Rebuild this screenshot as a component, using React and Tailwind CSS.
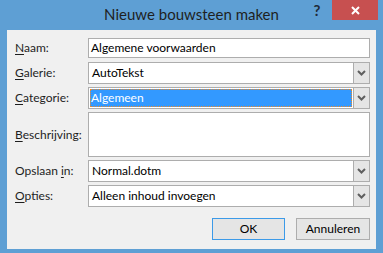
const font = { fontFamily: 'Lato, "Noto Sans", sans-serif' };

const Chevron = () => (
  <svg width="9" height="6" viewBox="0 0 9 6">
    <path d="M1 1 L4.5 4.5 L8 1" fill="none" stroke="#5f5f5f" strokeWidth="2" />
  </svg>
);

const Label = ({ u, rest }) => (
  <span className="w-[73px] shrink-0 text-[12px] text-[#1e1e1e]">
    <span className="underline underline-offset-2">{u}</span>
    {rest}
  </span>
);

const TextField = ({ value, h = 'h-[20px]' }) => (
  <div className={`flex-1 ${h} bg-white border border-[#adadad] flex items-center px-[2px] text-[12px] text-black`}>
    {value}
  </div>
);

const Combo = ({ value, selected }) => (
  <div className="flex-1 h-[22px] bg-white border border-[#adadad] flex items-stretch">
    <div className="flex-1 flex items-center p-[1px]">
      {selected ? (
        <div className="w-full h-full bg-[#3399ff] outline outline-1 outline-dotted outline-[#f08a24] -outline-offset-1 flex items-center px-[1px] text-[12px] text-white">
          {value}
        </div>
      ) : (
        <span className="px-[2px] text-[12px] text-black">{value}</span>
      )}
    </div>
    <div className="w-[16px] bg-[#e5e5e5] border-l border-[#adadad] flex items-center justify-center">
      <Chevron />
    </div>
  </div>
);

export default function App() {
  return (
    <div className="w-[383px] h-[253px] bg-[#5e9fd4] flex flex-col px-[7px] pb-[4px] relative" style={font}>
      <div className="h-[30px] flex items-center justify-center text-[15px] text-[#1f1f1f] pb-[1px]">
        Nieuwe bouwsteen maken
      </div>
      <div className="absolute top-0 right-[5px] flex items-start">
        <div className="w-[30px] h-[20px] flex items-center justify-center text-[15px] font-bold text-[#1e2a38]">?</div>
        <div className="w-[46px] h-[20px] bg-[#c75050] flex items-center justify-center">
          <svg width="9" height="9" viewBox="0 0 9 9">
            <path d="M1 1 L8 8 M8 1 L1 8" stroke="white" strokeWidth="2" />
          </svg>
        </div>
      </div>
      <div className="flex-1 bg-[#f0f0f0] pt-[8px] pl-[8px] pr-[6px] flex flex-col">
        <div className="flex items-center">
          <Label u="N" rest="aam:" />
          <TextField value="Algemene voorwaarden" />
        </div>
        <div className="flex items-center mt-[4px]">
          <Label u="G" rest="alerie:" />
          <Combo value="AutoTekst" />
        </div>
        <div className="flex items-center mt-[3px]">
          <Label u="C" rest="ategorie:" />
          <Combo value="Algemeen" selected />
        </div>
        <div className="flex items-center mt-[3px]">
          <Label u="B" rest="eschrijving:" />
          <TextField value="" h="h-[45px]" />
        </div>
        <div className="flex items-center mt-[3px]">
          <span className="w-[73px] shrink-0 text-[12px] text-[#1e1e1e]">
            Opslaan <span className="underline underline-offset-2">i</span>n:
          </span>
          <Combo value="Normal.dotm" />
        </div>
        <div className="flex items-center mt-[3px]">
          <Label u="O" rest="pties:" />
          <Combo value="Alleen inhoud invoegen" />
        </div>
        <div className="flex justify-end gap-[11px] mt-[11px]">
          <button className="w-[73px] h-[22px] bg-[#e5e5e5] border border-[#3c9ae8] text-[12px] text-black flex items-center justify-center">
            OK
          </button>
          <button className="w-[74px] h-[22px] bg-[#e5e5e5] border border-[#adadad] text-[12px] text-black flex items-center justify-center">
            Annuleren
          </button>
        </div>
      </div>
    </div>
  );
}
